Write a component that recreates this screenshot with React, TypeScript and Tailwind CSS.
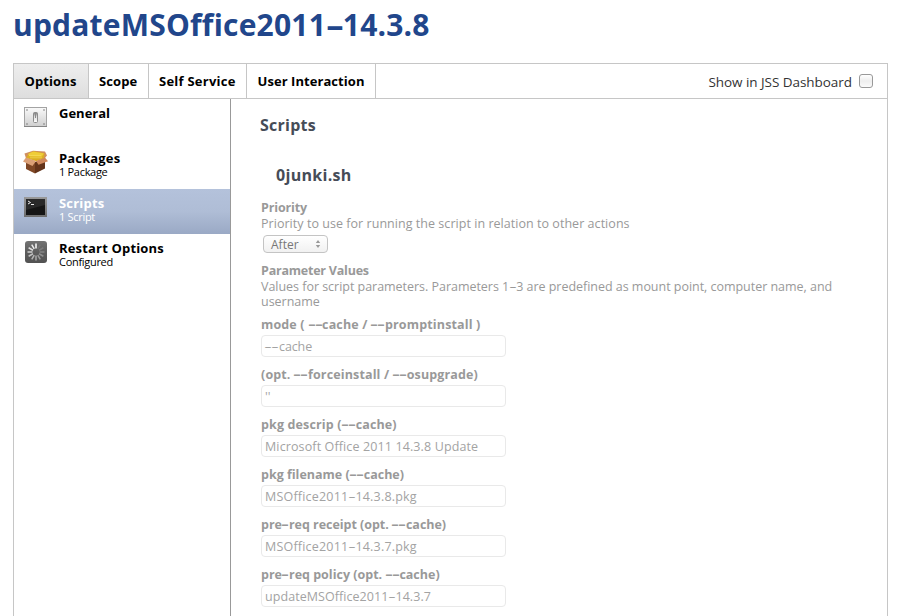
import type { ReactNode } from "react";

function Dashed({ children }: { children: string }) {
  return (
    <>
      {children.split(/(-)/).map((part, i) =>
        part === "-" ? (
          <span key={i} className="inline-block w-[0.56em] text-center"><span className="inline-block scale-x-[1.85] tracking-normal">-</span></span>
        ) : (
          part
        ),
      )}
    </>
  );
}

function SwitchIcon() {
  return (
    <svg width="23" height="20" viewBox="0 0 23 20">
      <defs>
        <linearGradient id="plate" x1="0" y1="0" x2="0" y2="1"><stop offset="0" stopColor="#fafafa" /><stop offset="1" stopColor="#cfcfcf" /></linearGradient>
        <linearGradient id="toggle" x1="0" y1="0" x2="0" y2="1"><stop offset="0" stopColor="#777" /><stop offset="0.4" stopColor="#ddd" /><stop offset="1" stopColor="#fff" /></linearGradient>
      </defs>
      <rect x="0.5" y="0.5" width="22" height="19" fill="url(#plate)" stroke="#a3a3a3" />
      <path d="M0 19.5h23" stroke="#858585" />
      <rect x="9.5" y="5.5" width="4" height="10" rx="1" fill="url(#toggle)" stroke="#8b8b8b" />
      <path d="M11.5 6v5" stroke="#8a8a8a" />
      {[[3, 3], [20, 3], [3, 17], [20, 17]].map(([x, y]) => <circle key={`${x}-${y}`} cx={x} cy={y} r="0.8" fill="#777" />)}
    </svg>
  );
}

function PackageIcon() {
  return (
    <svg width="25" height="24" viewBox="0 0 25 24">
      <path d="M3 9 12 12V23.5L3 19Z" fill="#7f4725" />
      <path d="M12 12 22 9V18.5L12 23.5Z" fill="#63331a" />
      <path d="M1.5 3.5 10 .8 22 1.5 24 5.5 21.5 8.5 3 8.5Z" fill="#cf8f60" />
      <path d="M3 8 6 3.2 11 1.2 21.5 3.2 21 8.5 13 11.2Z" fill="#dcae22" />
      <path d="M5 4 10 1.6 21 3.6 18.5 6.8 7 6.5Z" fill="#efcd38" />
      <path d="M6 5.5h12M7 7.8h12" stroke="#f6dc5c" strokeWidth="0.7" />
      <path d="M3 7.5 13 11 9.5 16 0 11.5Z" fill="#dba077" />
      <path d="M22 7.5 25 11.3 15.5 14.7 13 11Z" fill="#cf885c" />
    </svg>
  );
}

function TerminalIcon() {
  return (
    <svg width="23" height="20" viewBox="0 0 23 20">
      <defs><linearGradient id="bezel" x1="0" y1="0" x2="0" y2="1"><stop offset="0" stopColor="#999" /><stop offset="1" stopColor="#6d6d6d" /></linearGradient></defs>
      <rect width="23" height="20" fill="url(#bezel)" />
      <rect x="2" y="2" width="19" height="16" fill="#151515" />
      <path d="M2 2h19v6L2 13Z" fill="#292929" />
      <path d="m4 4 2.5 1.5L4 7M7 7.5h3" fill="none" stroke="#eee" strokeWidth="1" />
    </svg>
  );
}

const SPOKES = ["#fff", "#777", "#7c7c7c", "#858585", "#909090", "#9c9c9c", "#a8a8a8", "#b4b4b4", "#c2c2c2", "#d0d0d0", "#dedede", "#eee"];

function RestartIcon() {
  return (
    <svg width="22" height="22" viewBox="0 0 22 22">
      <defs><linearGradient id="tile" x1="0" y1="0" x2="0" y2="1"><stop offset="0" stopColor="#747474" /><stop offset="0.5" stopColor="#5d5d5d" /><stop offset="1" stopColor="#525252" /></linearGradient></defs>
      <rect width="22" height="22" rx="3" fill="url(#tile)" />
      {SPOKES.map((c, i) => <path key={i} d="M11 2.5v5" stroke={c} strokeWidth="1.5" transform={`rotate(${i * 30} 11 11)`} />)}
    </svg>
  );
}

function SideItem({ icon, title, sub, active }: { icon: ReactNode; title: ReactNode; sub?: ReactNode; active?: boolean }) {
  return (
    <li className={`flex h-[45px] ${active ? "bg-linear-to-b from-[#b4c2db] via-[#afbdd6] to-[#9aa9c5] text-white" : "text-black"}`}>
      <div className="flex w-[45px] justify-center pt-2 pr-[2px]">{icon}</div>
      <div className="pt-[7px] whitespace-nowrap">
        <div className="text-[13px] leading-[15px] font-bold">{title}</div>
        <div className="text-[11px] leading-[11px] tracking-[-0.3px]">{sub}</div>
      </div>
    </li>
  );
}

const FIELDS = [
  { label: "mode ( --cache / --promptinstall )", lt: "tracking-[0.15px]", value: "--cache", vt: "tracking-[-0.1px]" },
  { label: "(opt. --forceinstall / --osupgrade)", lt: "tracking-[0.14px]", value: "''", vt: "tracking-normal" },
  { label: "pkg descrip (--cache)", lt: "tracking-[0.14px]", value: "Microsoft Office 2011 14.3.8 Update", vt: "tracking-[0.12px]" },
  { label: "pkg filename (--cache)", lt: "tracking-normal", value: "MSOffice2011-14.3.8.pkg", vt: "tracking-[0.2px]" },
  { label: "pre-req receipt (opt. --cache)", lt: "tracking-[-0.03px]", value: "MSOffice2011-14.3.7.pkg", vt: "tracking-[0.2px]" },
  { label: "pre-req policy (opt. --cache)", lt: "tracking-normal", value: "updateMSOffice2011-14.3.7", vt: "tracking-[0.06px]" },
];

export default function App() {
  return (
    <div className="h-[616px] w-[907px] overflow-hidden bg-white pl-[13px] font-['Open_Sans','Noto_Sans',sans-serif]">
      <h1 className="h-[63px] pt-[5px] text-[30px] leading-[40px] font-bold tracking-[0.2px] whitespace-nowrap text-[#21468b]">
        <Dashed>updateMSOffice2011-14.3.8</Dashed>
      </h1>
      <main className="flex h-[560px] w-[875px] flex-col border border-[#c6c6c6]">
        <header className="flex h-[35px] shrink-0 border-b border-[#c6c6c6] text-[13px] leading-[35px] font-bold whitespace-nowrap text-black">
          <div className="w-[75px] border-r border-[#c6c6c6] bg-linear-to-b from-[#eee] to-[#dedede] pl-[10.5px] tracking-[0.1px]">Options</div>
          <div className="w-[60px] border-r border-[#c6c6c6] pl-[10px] tracking-[0.1px]">Scope</div>
          <div className="w-[98px] border-r border-[#c6c6c6] pl-[10px] tracking-[0.24px]">Self Service</div>
          <div className="w-[129px] border-r border-[#c6c6c6] pl-[10.5px] tracking-[0.06px]">User Interaction</div>
          <label className="ml-auto flex items-center pr-[14px] text-[13.5px] font-normal tracking-[-0.05px] text-[#333]">
            <span className="pt-[2px]">Show in JSS Dashboard</span>
            <span className="ml-[7px] size-[14px] rounded-[3px] border border-[#999] bg-linear-to-b from-white via-[#eee] to-[#fafafa]" />
          </label>
        </header>
        <div className="flex flex-1">
          <ul className="w-[217px] shrink-0 border-r border-[#999]">
            <SideItem icon={<SwitchIcon />} title="General" />
            <SideItem icon={<div className="-mt-[2px]"><PackageIcon /></div>} title={<span className="tracking-[0.15px]">Packages</span>} sub="1 Package" />
            <SideItem icon={<TerminalIcon />} title={<span className="tracking-[0.2px]">Scripts</span>} sub="1 Script" active />
            <SideItem icon={<div className="-mt-px"><RestartIcon /></div>} title={<span className="tracking-[0.17px]">Restart Options</span>} sub="Configured" />
          </ul>
          <section className="flex-1 pl-[30px] text-[12.5px] leading-[15px] whitespace-nowrap text-[#999]">
            <h2 className="-ml-px h-[50px] pt-[14px] text-[16px] leading-[24px] font-bold tracking-[0.25px] text-[#464c57]">Scripts</h2>
            <h3 className="h-[51px] pt-[14px] pl-[15px] text-[16px] leading-[24px] font-bold tracking-[0.3px] text-[#464c57]">0junki.sh</h3>
            <div className="leading-[16px] font-bold tracking-[-0.14px]">Priority</div>
            <p className="leading-[16px] tracking-[0.04px]">Priority to use for running the script in relation to other actions</p>
            <div className="mt-[3px] ml-[2px] flex h-[18px] w-[65px] items-center justify-between rounded-[4px] border border-[#c4c4c4] bg-linear-to-b from-white to-[#f1f1f1] pr-[6px] pl-[7px] text-[12px] text-[#777]">
              After
              <svg width="6" height="8" viewBox="0 0 6 8"><path d="M3 0 5.2 3H.8ZM3 8 .8 5h4.4Z" fill="#999" /></svg>
            </div>
            <div className="mt-[10px] leading-[16px] font-bold tracking-[-0.22px]">Parameter Values</div>
            <p className="tracking-[-0.03px]">Values for script parameters. Parameters <Dashed>1-3</Dashed> are predefined as mount point, computer name, and<br />username</p>
            <div className="pt-[6px]">
              {FIELDS.map((f) => (
                <div key={f.label} className="h-[50px]">
                  <div className={`h-[20px] leading-[20px] font-bold ${f.lt}`}><Dashed>{f.label}</Dashed></div>
                  <div className={`h-[22px] w-[245px] rounded-[4px] border border-[#e9e9e9] pl-[3px] leading-[22px] text-[#a3a3a3] ${f.vt}`}><Dashed>{f.value}</Dashed></div>
                </div>
              ))}
            </div>
          </section>
        </div>
      </main>
    </div>
  );
}
